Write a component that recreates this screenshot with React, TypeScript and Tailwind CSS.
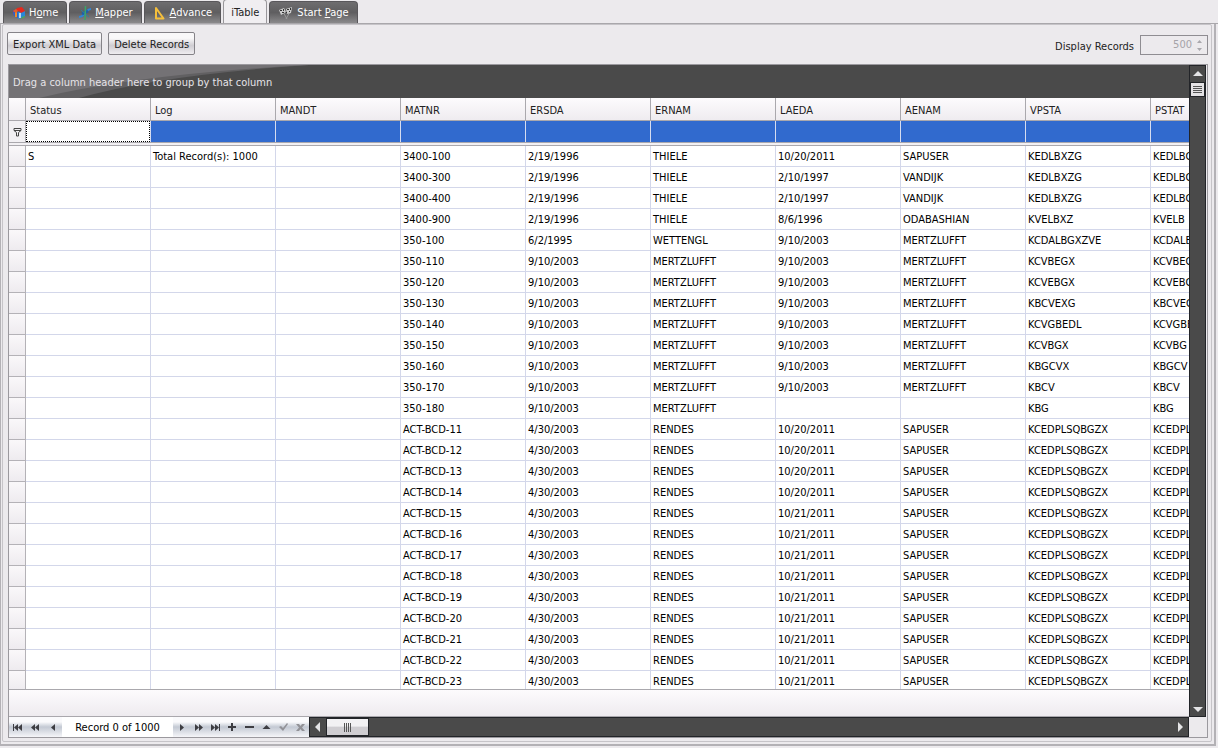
import { ReactNode } from "react";

const COLUMNS = ["Status", "Log", "MANDT", "MATNR", "ERSDA", "ERNAM", "LAEDA", "AENAM", "VPSTA", "PSTAT"];

const ROWS: string[][] = [
  ["3400-100", "2/19/1996", "THIELE", "10/20/2011", "SAPUSER", "KEDLBXZG", "KEDLBG"],
  ["3400-300", "2/19/1996", "THIELE", "2/10/1997", "VANDIJK", "KEDLBXZG", "KEDLBG"],
  ["3400-400", "2/19/1996", "THIELE", "2/10/1997", "VANDIJK", "KEDLBXZG", "KEDLBG"],
  ["3400-900", "2/19/1996", "THIELE", "8/6/1996", "ODABASHIAN", "KVELBXZ", "KVELB"],
  ["350-100", "6/2/1995", "WETTENGL", "9/10/2003", "MERTZLUFFT", "KCDALBGXZVE", "KCDALB"],
  ["350-110", "9/10/2003", "MERTZLUFFT", "9/10/2003", "MERTZLUFFT", "KCVBEGX", "KCVBEG"],
  ["350-120", "9/10/2003", "MERTZLUFFT", "9/10/2003", "MERTZLUFFT", "KCVEBGX", "KCVEBG"],
  ["350-130", "9/10/2003", "MERTZLUFFT", "9/10/2003", "MERTZLUFFT", "KBCVEXG", "KBCVEG"],
  ["350-140", "9/10/2003", "MERTZLUFFT", "9/10/2003", "MERTZLUFFT", "KCVGBEDL", "KCVGBE"],
  ["350-150", "9/10/2003", "MERTZLUFFT", "9/10/2003", "MERTZLUFFT", "KCVBGX", "KCVBG"],
  ["350-160", "9/10/2003", "MERTZLUFFT", "9/10/2003", "MERTZLUFFT", "KBGCVX", "KBGCV"],
  ["350-170", "9/10/2003", "MERTZLUFFT", "9/10/2003", "MERTZLUFFT", "KBCV", "KBCV"],
  ["350-180", "9/10/2003", "MERTZLUFFT", "", "", "KBG", "KBG"],
  ...Array.from({ length: 13 }, (_, i) => [
    `ACT-BCD-${i + 11}`,
    "4/30/2003",
    "RENDES",
    i < 4 ? "10/20/2011" : "10/21/2011",
    "SAPUSER",
    "KCEDPLSQBGZX",
    "KCEDPL",
  ]),
];

function HomeIcon() {
  return (
    <svg width="14" height="14" viewBox="0 0 14 14" aria-hidden="true">
      <path d="M1 4l2 1v5l-2-2z" fill="#7b3fa0" />
      <path d="M1 6h5v6l-4-2z" fill="#2d62c4" />
      <path d="M3 6h2v5H3z" fill="#f08a28" />
      <path d="M6 6l7-1v6l-7 2z" fill="#2a86d8" />
      <path d="M7 7h2v5H7z" fill="#b8d4f0" />
      <path d="M3 5l2-3 5-1 3 4-4 2-2-2z" fill="#e8281c" />
      <path d="M1 5l3-2 2 2-2 2z" fill="#e0602c" />
      <path d="M10 11l3-1v1l-4 2z" fill="#48b048" />
    </svg>
  );
}

function MapperIcon() {
  return (
    <svg width="14" height="16" viewBox="0 0 14 16" fill="none" aria-hidden="true">
      <path d="M1 12c4 0 4-2 6-4s3-4 6-4" stroke="#2f86d8" strokeWidth="2" />
      <path d="M4 9l6-3" stroke="#1f5fa8" strokeWidth="3" />
      <path d="M3 5l8 7" stroke="#2f7fa0" />
      <path d="M7.500 1L7 15" stroke="#3da468" strokeWidth="1.500" />
    </svg>
  );
}

function AdvanceIcon() {
  return (
    <svg width="14" height="14" viewBox="0 0 14 14" fill="none" aria-hidden="true">
      <path d="M3 2v10.500h7.500z" stroke="#f5bf3c" strokeWidth="2" strokeLinejoin="round" />
    </svg>
  );
}

function FlagsIcon() {
  return (
    <svg width="16" height="14" viewBox="0 0 16 14" aria-hidden="true">
      <path d="M4 4l5 9M13 4L8 13" stroke="#999" fill="none" />
      <path d="M1 4l5-2 2 4-5 3z" fill="#ccc" />
      <path d="M8 3l6-2-1 6-4 1z" fill="#ccc" />
      <path d="M2 4h2v1H2zM4 6h2v1H4zM5 3h1v2H5zM9 3h2v1H9zM11 5h1v1h-1zM12 2h1v2h-1zM8 6h1v1H8z" fill="#333" />
    </svg>
  );
}

function Tab({ icon, active, children }: { icon?: ReactNode; active?: boolean; children: ReactNode }) {
  return (
    <button
      type="button"
      role="tab"
      aria-selected={!!active}
      className={
        active
          ? "flex h-6 shrink-0 items-center rounded-t-sm border border-b-0 border-[#98969a] bg-[#f0eef1] px-[7px] pt-[3px] text-[#222]"
          : "flex h-[22px] shrink-0 items-center gap-[3px] rounded-t-sm border border-b-0 border-[#59575b] bg-linear-to-b from-[#6e6d6f] via-[#5f5e60] to-[#8b8a8c] px-2 pt-px text-white"
      }
    >
      {icon}
      <span>{children}</span>
    </button>
  );
}

function NavButton({ label, path, muted }: { label: string; path: string; muted?: boolean }) {
  return (
    <button type="button" aria-label={label} className="flex h-full flex-1 items-center justify-center">
      <svg
        width="11"
        height="9"
        viewBox="0 0 11 9"
        aria-hidden="true"
        className={muted ? "fill-[#929297]" : "fill-[#3d3d42]"}
      >
        <path d={path} />
      </svg>
    </button>
  );
}

function Arrow({ path }: { path: string }) {
  return (
    <svg width="10" height="10" viewBox="0 0 10 10" fill="#e4e4e6" aria-hidden="true">
      <path d={path} />
    </svg>
  );
}

const toolButton =
  "h-[23px] rounded-xs border border-[#858388] bg-linear-to-b from-[#f9f8f9] from-25% via-[#cfcdd2] via-60% to-[#efedf0] px-[5px] pt-[2px] text-[#222]";

export default function App() {
  return (
    <main className="flex h-screen min-h-64 flex-col overflow-hidden bg-[#eceaed] font-['DejaVu_Sans_Condensed','Noto_Sans',sans-serif] text-[11px] leading-4 text-black">
      <div role="tablist" className="flex h-6 shrink-0 items-end gap-[2px] border-b border-[#a9a7ab] pl-[3px]">
        <Tab icon={<HomeIcon />}>H<u>o</u>me</Tab>
        <Tab icon={<MapperIcon />}><u>M</u>apper</Tab>
        <Tab icon={<AdvanceIcon />}><u>A</u>dvance</Tab>
        <Tab active>iTable</Tab>
        <Tab icon={<FlagsIcon />}>Start <u>P</u>age</Tab>
      </div>

      <div className="mr-[2px] mb-[2px] flex min-h-0 flex-1 flex-col border-r-2 border-b-2 border-l border-[#b3b1b5] pr-[2px] pb-[2px] pl-px">
        <div className="flex min-h-0 flex-1 flex-col rounded-xs border border-[#c6c4c8] pr-[3px] pb-[3px] pl-1">
          <div className="flex h-[39px] shrink-0 items-end gap-[6px] pb-[9px]">
            <button type="button" className={toolButton}>Export XML Data</button>
            <button type="button" className={toolButton}>Delete Records</button>
            <label htmlFor="display-records" className="ml-auto text-[#222]">Display Records</label>
            <div className="flex h-5 w-[68px] items-center border border-[#8f8d92]">
              <input
                id="display-records"
                defaultValue="500"
                disabled
                className="min-w-0 flex-1 bg-transparent text-right text-[#a5a3a8]"
              />
              <svg width="15" height="16" viewBox="0 0 15 16" fill="#aaa8ad" aria-hidden="true">
                <path d="M5 6h5L7.500 3zM5 11h5L7.500 14z" />
              </svg>
            </div>
          </div>

          <section className="ml-px flex min-h-0 flex-1 flex-col border border-[#9b999e] bg-[#eceaed] pr-px">
            <div className="flex min-h-0 flex-1">
              <div className="flex min-w-0 flex-1 flex-col">
                <div className="relative flex h-[33px] shrink-0 items-center bg-[#4a4a4a] pt-[2px] pl-1 text-[#e6e4e8]">
                  <svg width="300" height="33" viewBox="0 0 300 33" className="absolute top-0 left-0" aria-hidden="true">
                    <path d="M0 0h300Q150 10 70 33H0z" fill="#616062" />
                    <path d="M0 0h300Q130 9 30 33H0z" fill="#747275" />
                  </svg>
                  <span className="relative">Drag a column header here to group by that column</span>
                </div>
                <div className="min-h-0 flex-1 overflow-hidden bg-white">
                  <table className="w-[1267px] table-fixed border-separate border-spacing-0">
                    <colgroup>
                      <col className="w-[17px]" />
                      {COLUMNS.map((name) => (
                        <col key={name} className="w-[125px]" />
                      ))}
                    </colgroup>
                    <thead>
                      <tr className="h-[23px] bg-linear-to-b from-[#fdfbfd] to-[#eeebef]">
                        <th className="border-r border-b border-[#aaa8ad] p-0" />
                        {COLUMNS.map((name) => (
                          <th
                            key={name}
                            scope="col"
                            className="border-r border-b border-[#aaa8ad] pt-[3px] pr-0 pb-0 pl-1 text-left font-normal text-[#222]"
                          >
                            {name}
                          </th>
                        ))}
                      </tr>
                      <tr className="h-[21px]">
                        <td className="border-r border-[#aaa8ad] bg-[#f2f0f3] p-0">
                          <svg width="16" height="10" viewBox="0 0 16 10" fill="none" stroke="#444" aria-hidden="true">
                            <path d="M5 1.500h7v2l-2.500 2V9h-2V5.500L5 3.500zM5 3.500h7" />
                          </svg>
                        </td>
                        {COLUMNS.map((name, i) => (
                          <td key={name} className="border-r border-[#d5dcf0] bg-[#316ace] p-0">
                            <input
                              aria-label={`Filter ${name}`}
                              className={
                                i === 0
                                  ? "block h-[21px] w-full border border-dotted border-black bg-white px-1"
                                  : "block h-[21px] w-full bg-[#316ace] px-1 text-white"
                              }
                            />
                          </td>
                        ))}
                      </tr>
                      <tr className="h-1">
                        <td colSpan={11} className="border-y border-[#aaa8ad] bg-[#f2f0f3] p-0" />
                      </tr>
                    </thead>
                    <tbody>
                      {ROWS.map((row, r) => (
                        <tr key={row[0]} className="h-[21px]">
                          <td className="border-r border-b border-[#b4b2b7] bg-linear-to-b from-[#faf8fa] to-[#eeebef] p-0" />
                          {[r === 0 ? "S" : "", r === 0 ? "Total Record(s): 1000" : "", "", ...row].map((value, c) => (
                            <td
                              key={COLUMNS[c]}
                              className="border-r border-b border-[#d3d7ea] pt-px pr-0 pb-0 pl-[2px] whitespace-nowrap"
                            >
                              {value}
                            </td>
                          ))}
                        </tr>
                      ))}
                    </tbody>
                  </table>
                </div>
                <div className="h-7 shrink-0 border-y border-[#aaa8ad] bg-linear-to-b from-[#fdfbfd] to-[#eeebef]" />
              </div>

              <div className="flex w-[17px] shrink-0 flex-col items-center border border-[#222428] bg-[#4a4a4a]">
                <button type="button" aria-label="Scroll up" className="flex h-4 items-center">
                  <Arrow path="M0 7h10L5 2z" />
                </button>
                <div className="flex h-[15px] w-full flex-col items-center justify-center gap-px border border-[#222428] bg-[#e4e2e5]">
                  <span className="h-px w-[9px] bg-[#555]" />
                  <span className="h-px w-[9px] bg-[#555]" />
                  <span className="h-px w-[9px] bg-[#555]" />
                  <span className="h-px w-[9px] bg-[#555]" />
                </div>
                <button type="button" aria-label="Scroll down" className="mt-auto flex h-4 items-center">
                  <Arrow path="M0 4h10L5 9z" />
                </button>
              </div>
            </div>

            <div className="flex h-5 shrink-0">
              <div className="flex w-[300px] shrink-0 items-center bg-linear-to-b from-[#fafafc] from-25% via-[#c3c9d3] via-50% to-[#f6f6f9]">
                <div className="flex h-full w-[53px]">
                  <NavButton label="First record" path="M1 1h1v7H1zM6 1v7L2 4.500zM10 1v7L6 4.500z" />
                  <NavButton label="Previous page" path="M5 1v7L1 4.500zM9 1v7L5 4.500z" />
                  <NavButton label="Previous record" path="M7 1v7L3 4.500z" />
                </div>
                <div className="h-full w-[111px] bg-white pt-px text-center leading-5">Record 0 of 1000</div>
                <div className="flex h-full flex-1">
                  <NavButton label="Next record" path="M4 1v7l4-3.500z" />
                  <NavButton label="Next page" path="M2 1v7l4-3.500zM6 1v7l4-3.500z" />
                  <NavButton label="Last record" path="M1 1v7l4-3.500zM5 1v7l4-3.500zM9 1h1v7H9z" />
                  <NavButton label="Add record" path="M4 0h2v3h3v2H6v3H4V5H1V3h3z" />
                  <NavButton label="Remove record" path="M1 3h9v2H1z" />
                  <NavButton label="Edit record" path="M1.500 6h8l-4-4z" />
                  <NavButton label="Accept" muted path="M1 4l2-1 2 2 4-5 1 1-5 7z" />
                  <NavButton label="Cancel" muted path="M1 1h3l1.500 2L7 1h3L7 4.500 10 8H7L5.500 6 4 8H1l3-3.500z" />
                </div>
              </div>
              <div className="flex min-w-0 flex-1 items-center border border-[#222428] bg-[#4a4a4a]">
                <button type="button" aria-label="Scroll left" className="flex w-4 justify-center">
                  <Arrow path="M7 0v10L2 5z" />
                </button>
                <div className="flex h-[18px] w-[43px] items-center justify-center gap-px border border-[#222428] bg-linear-to-b from-[#f2f1f3] from-45% to-[#cfcdd1] to-50%">
                  <span className="h-[9px] w-px bg-[#555]" />
                  <span className="h-[9px] w-px bg-[#555]" />
                  <span className="h-[9px] w-px bg-[#555]" />
                  <span className="h-[9px] w-px bg-[#555]" />
                </div>
                <button type="button" aria-label="Scroll right" className="ml-auto flex w-4 justify-center">
                  <Arrow path="M3 0v10l5-5z" />
                </button>
              </div>
              <div className="w-[17px] shrink-0" />
            </div>
          </section>
        </div>
      </div>
    </main>
  );
}
